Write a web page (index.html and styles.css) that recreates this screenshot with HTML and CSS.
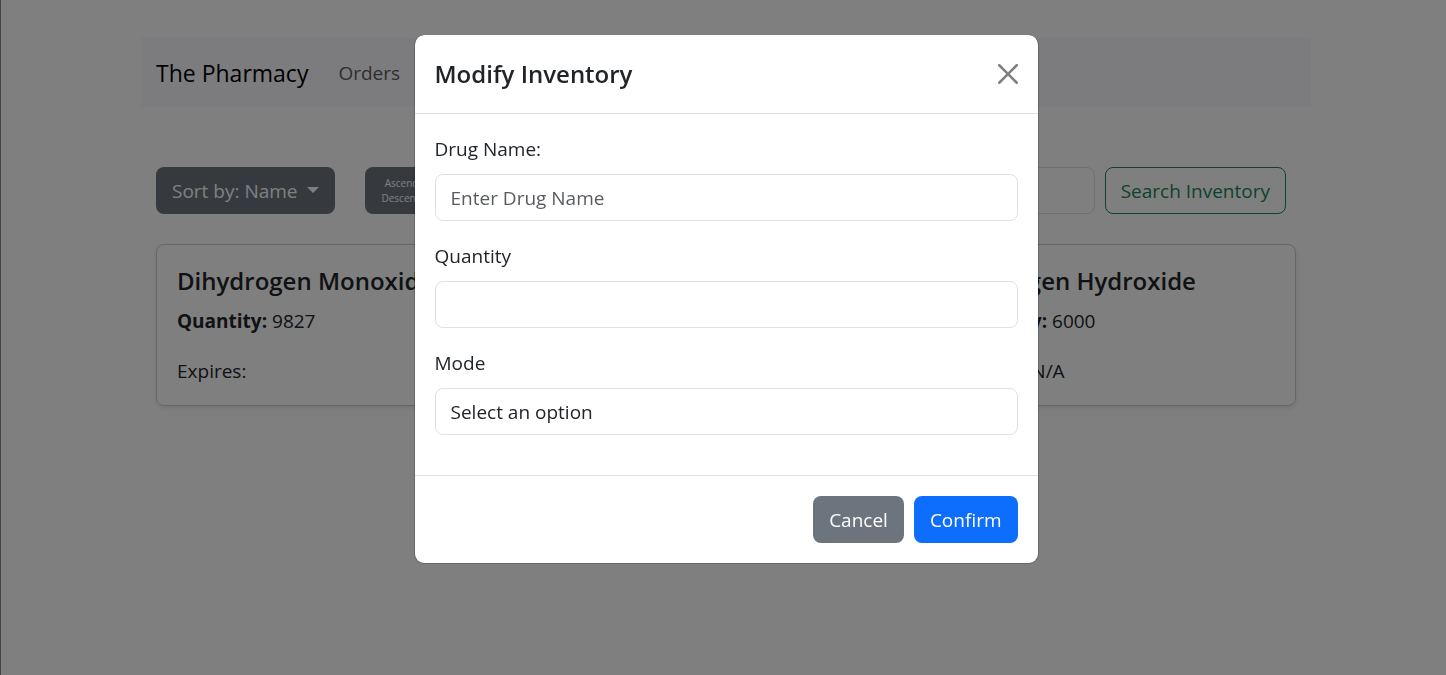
FILE: index.html
```html
<!DOCTYPE html>
<html lang="en">
<head>
<meta charset="utf-8">
<meta name="viewport" content="width=device-width, initial-scale=1">
<title>The Pharmacy</title>
<link rel="stylesheet" href="styles.css">
</head>
<body>
<div class="page">
  <div class="container">
    <nav class="navbar">
      <a class="brand" href="#">The Pharmacy</a>
      <a class="nav-link" href="#">Orders</a>
    </nav>
    <main class="content">
      <div class="toolbar">
        <button class="btn btn-secondary" type="button">Sort by: Name <span class="caret"></span></button>
        <button class="btn btn-secondary btn-order" type="button"><span>Ascending</span><span>Descending</span></button>
        <form class="search">
          <input class="control" type="search" aria-label="Search">
          <button class="btn btn-outline" type="button">Search Inventory</button>
        </form>
      </div>
      <div class="cards">
        <article class="card">
          <h2 class="title">Dihydrogen Monoxide</h2>
          <p class="line"><strong>Quantity:</strong> 9827</p>
          <p class="line">Expires:</p>
        </article>
        <article class="card"></article>
        <article class="card">
          <h2 class="title">Hydrogen Hydroxide</h2>
          <p class="line"><strong>Quantity:</strong> 6000</p>
          <p class="line">Expires: N/A</p>
        </article>
      </div>
    </main>
  </div>
</div>
<div class="backdrop">
  <div class="modal" role="dialog" aria-modal="true" aria-labelledby="modal-title">
    <header class="modal-header">
      <h1 class="title" id="modal-title">Modify Inventory</h1>
      <button class="close" type="button" aria-label="Close">
        <svg width="20" height="20" viewBox="0 0 16 16" fill="#000" aria-hidden="true"><path d="M.293.293a1 1 0 0 1 1.414 0L8 6.586 14.293.293a1 1 0 1 1 1.414 1.414L9.414 8l6.293 6.293a1 1 0 0 1-1.414 1.414L8 9.414l-6.293 6.293a1 1 0 0 1-1.414-1.414L6.586 8 .293 1.707a1 1 0 0 1 0-1.414z"/></svg>
      </button>
    </header>
    <form class="modal-body">
      <div class="field">
        <label for="drug">Drug Name:</label>
        <input class="control" id="drug" type="text" placeholder="Enter Drug Name">
      </div>
      <div class="field">
        <label for="quantity">Quantity</label>
        <input class="control" id="quantity" type="text">
      </div>
      <div class="field">
        <label for="mode">Mode</label>
        <select class="control" id="mode"><option>Select an option</option></select>
      </div>
    </form>
    <footer class="modal-footer">
      <button class="btn btn-secondary" type="button">Cancel</button>
      <button class="btn btn-primary" type="button">Confirm</button>
    </footer>
  </div>
</div>
</body>
</html>
```
FILE: styles.css
```css
*, *::before, *::after { box-sizing: border-box; }
body {
  margin: 0;
  min-height: 100vh;
  background: #fff;
  color: #212529;
  font: 400 19px/30px "Segoe UI", "Open Sans", "Noto Sans", sans-serif;
}
h1, h2, p { margin: 0; }
.page {
  min-height: 100vh;
  padding: 38px 0 0 5px;
  border-left: 1px solid #888;
}
.container { max-width: 1170px; margin: 0 auto; }
.navbar {
  display: flex;
  align-items: center;
  gap: 30px;
  height: 69px;
  padding: 0 15px;
  background: #f8f8fc;
}
.brand { color: #000; font-size: 23px; text-decoration: none; }
.nav-link { color: #5c5d5f; text-decoration: none; }
.content { padding: 60px 15px 0; }
.toolbar { display: flex; gap: 30px; padding-right: 10px; }
.btn {
  height: 47px;
  padding: 0 15px;
  border: 1px solid transparent;
  border-radius: 8px;
  font: inherit;
  white-space: nowrap;
  cursor: pointer;
}
.btn-secondary { background: #6c757d; color: #fff; }
.btn-primary { background: #0d6efd; color: #fff; }
.btn-outline { background: none; border-color: #198754; color: #198754; }
.btn-order {
  display: flex;
  flex-direction: column;
  align-items: center;
  justify-content: center;
  font-size: 10px;
  line-height: 15px;
}
.caret {
  display: inline-block;
  margin-left: 5px;
  vertical-align: 5px;
  border: 6px solid transparent;
  border-top-color: currentColor;
  border-bottom: 0;
}
.search { display: flex; flex: 1; gap: 10px; }
.control {
  display: block;
  width: 100%;
  height: 47px;
  padding: 0 15px;
  border: 1px solid #dee2e6;
  border-radius: 8px;
  background: #fff;
  color: #212529;
  font: inherit;
  appearance: none;
}
.control::placeholder { color: #595c5f; opacity: 1; }
.search .control { flex: 1; width: auto; }
.cards {
  display: grid;
  grid-template-columns: repeat(3, 1fr);
  gap: 30px;
  margin-top: 30px;
}
.card {
  min-height: 162px;
  padding: 21px 20px 18px;
  border: 1px solid #ccc;
  border-radius: 8px;
  box-shadow: 0 2px 5px rgba(0, 0, 0, .1);
}
.title { font-size: 24px; line-height: 30px; font-weight: 600; }
.card .title { margin-bottom: 10px; }
.card .line + .line { margin-top: 20px; }
.backdrop {
  position: fixed;
  inset: 0;
  padding: 35px 0 0 6px;
  background: rgba(0, 0, 0, .5);
}
.modal {
  max-width: 625px;
  margin: 0 auto;
  border: 1px solid rgba(0, 0, 0, .18);
  border-top: 0;
  border-radius: 10px;
  background: #fff;
  background-clip: padding-box;
}
.modal-header {
  display: flex;
  align-items: center;
  justify-content: space-between;
  height: 79px;
  padding: 0 20px;
  border-bottom: 1px solid #dee2e6;
}
.close {
  display: flex;
  padding: 0;
  border: 0;
  background: none;
  opacity: .5;
  cursor: pointer;
}
.modal-body { display: grid; gap: 20px; padding: 20px 20px 40px; }
.field label { display: block; margin-bottom: 10px; }
.modal-footer {
  display: flex;
  justify-content: flex-end;
  gap: 10px;
  padding: 20px;
  border-top: 1px solid #dee2e6;
}
```
